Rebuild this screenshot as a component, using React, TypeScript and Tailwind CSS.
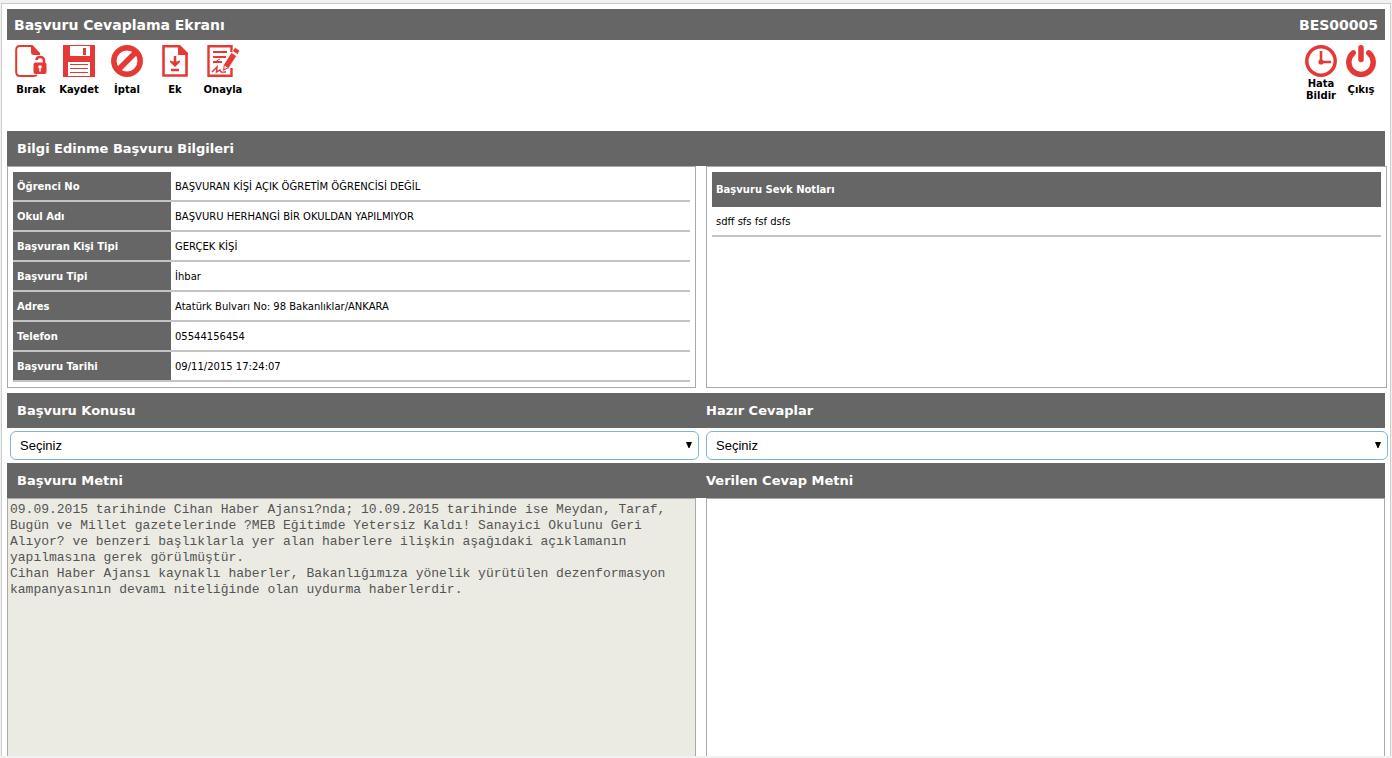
import React from 'react';

const RED = '#e53935';

function LockedPageIcon() {
  return (
    <svg width="32" height="32" viewBox="0 0 32 32" fill="none" aria-hidden="true">
      <path d="M17 1H5Q1.200 1 1.200 5V27Q1.200 31 5 31H18Q20.500 31 22 30" stroke={RED} strokeWidth="2" />
      <path d="M16 0H17.500L25 8V10H19Q16 10 16 7Z" fill={RED} />
      <rect x="18.500" y="17.500" width="13" height="11.500" rx="2" fill={RED} />
      <path d="M21.500 15Q21.500 12 25.200 12T29 15.500V18" stroke={RED} strokeWidth="2.500" />
      <circle cx="25" cy="22" r="1.800" fill="#fff" />
      <path d="M25 22V26.500" stroke="#fff" strokeWidth="1.500" />
    </svg>
  );
}

function SaveIcon() {
  return (
    <svg width="32" height="32" viewBox="0 0 32 32" fill={RED} aria-hidden="true">
      <path d="M0 0H32V32H0Z" />
      <path d="M7 1H27V11H7ZM5 17H27V31H5Z" fill="#fff" />
      <path d="M20 3H23V10H20ZM7 19H25V20H7ZM7 23H25V24H7ZM7 27H25V28H7Z" />
    </svg>
  );
}

function CancelIcon() {
  return (
    <svg width="32" height="32" viewBox="0 0 32 32" fill="none" stroke={RED} strokeWidth="5.500" aria-hidden="true">
      <circle cx="16" cy="16" r="13.200" />
      <path d="M7 25L25 7" />
    </svg>
  );
}

function AttachIcon() {
  return (
    <svg width="26" height="32" viewBox="0 0 26 32" fill="none" stroke={RED} strokeWidth="2" aria-hidden="true">
      <path d="M17 1.200H1.500V30.500H24.500V8" strokeWidth="2.600" />
      <path d="M16 0H18L26 8V10H16Z" fill={RED} stroke="none" />
      <path d="M13 11V18" strokeWidth="2.500" />
      <path d="M8 15.500L11 16.500H15L18 15.500V17L13 22L8 17Z" fill={RED} stroke="none" />
      <path d="M9 25H17" strokeWidth="2.500" />
    </svg>
  );
}

function ApproveIcon() {
  return (
    <svg width="33" height="32" viewBox="0 0 33 32" fill="none" stroke={RED} strokeWidth="2" aria-hidden="true">
      <path d="M24.500 7V1.200H1.500V30.800H24.500V23" strokeWidth="2.400" />
      <path d="M6 7H20M6 12H19M6 17H15" />
      <path d="M13 14L6 18" strokeWidth="1" />
      <path d="M5 27L10 22L9.500 27L13 25L14 27H19" strokeWidth="1.500" />
      <path d="M27 3.500Q28 2.500 29 3L32 5Q33 6 32 7L30.500 9.500L25.500 6ZM24.500 7.500L29.500 11L21.500 23.500L15.500 26.500L16.500 20Z" fill={RED} stroke="#fff" strokeWidth="0.600" />
      <path d="M17.500 20.500L20.500 22.500L17.500 24Z" fill="#fff" stroke="none" />
    </svg>
  );
}

function ClockIcon() {
  return (
    <svg width="32" height="32" viewBox="0 0 32 32" fill="none" stroke={RED} aria-hidden="true">
      <circle cx="16" cy="16" r="14.200" strokeWidth="3.500" />
      <path d="M16 6V17H26" strokeWidth="2.600" />
      <circle cx="16" cy="17" r="2.600" fill={RED} stroke="none" />
    </svg>
  );
}

function PowerIcon() {
  return (
    <svg width="30" height="32" viewBox="0 0 30 32" fill="none" stroke={RED} strokeWidth="5.500" strokeLinecap="round" aria-hidden="true">
      <path d="M7.200 7.800A12.200 12.200 0 1 0 22.800 7.800" />
      <path d="M15 2.800V14.500" />
    </svg>
  );
}

function ToolButton({ label, icon, width }: { label: string; icon: React.ReactNode; width: string }) {
  return (
    <button type="button" className={`flex flex-col items-center ${width}`}>
      {icon}
      <span className="mt-[7px] text-[10px] leading-3 font-bold">{label}</span>
    </button>
  );
}

function BarRow({ children }: { children: React.ReactNode }) {
  return (
    <div className="grid h-[35px] shrink-0 grid-cols-[699fr_679fr] items-center bg-[#666] text-[13px] font-bold text-white">
      {children}
    </div>
  );
}

function SelectBox({ id, className }: { id: string; className: string }) {
  return (
    <div className={`relative ${className}`}>
      <select
        id={id}
        className="block h-[29px] w-full appearance-none rounded-md border border-[#7fb5cf] bg-white pr-6 pl-[9px] font-['Liberation_Sans',sans-serif] text-[13px] text-black"
      >
        <option>Seçiniz</option>
      </select>
      <svg width="6" height="6" viewBox="0 0 6 6" className="pointer-events-none absolute top-[11px] right-[7px]" aria-hidden="true">
        <path d="M0 0H6L3.500 6H2.500Z" fill="#000" />
      </svg>
    </div>
  );
}

const details = [
  ['Öğrenci No', 'BAŞVURAN KİŞİ AÇIK ÖĞRETİM ÖĞRENCİSİ DEĞİL'],
  ['Okul Adı', 'BAŞVURU HERHANGİ BİR OKULDAN YAPILMIYOR'],
  ['Başvuran Kişi Tipi', 'GERÇEK KİŞİ'],
  ['Başvuru Tipi', 'İhbar'],
  ['Adres', 'Atatürk Bulvarı No: 98 Bakanlıklar/ANKARA'],
  ['Telefon', '05544156454'],
  ['Başvuru Tarihi', '09/11/2015 17:24:07'],
];

const requestText =
  '09.09.2015 tarihinde Cihan Haber Ajansı?nda; 10.09.2015 tarihinde ise Meydan, Taraf, Bugün ve Millet gazetelerinde ?MEB Eğitimde Yetersiz Kaldı! Sanayici Okulunu Geri Alıyor? ve benzeri başlıklarla yer alan haberlere ilişkin aşağıdaki açıklamanın yapılmasına gerek görülmüştür.\nCihan Haber Ajansı kaynaklı haberler, Bakanlığımıza yönelik yürütülen dezenformasyon kampanyasının devamı niteliğinde olan uydurma haberlerdir.';

export default function App() {
  return (
    <div className="flex min-h-screen flex-col overflow-x-hidden bg-[#f1f1f1] px-px pt-[3px] pb-0.5 font-['DejaVu_Sans',sans-serif] text-black">
      <main className="flex flex-1 flex-col border border-b-0 border-[#ccc] bg-white px-[5px] pt-[5px]">
        <header className="flex h-[31px] items-center justify-between bg-[#666] px-[7px] text-sm font-bold text-white">
          <h1>Başvuru Cevaplama Ekranı</h1>
          <span>BES00005</span>
        </header>

        <div className="flex h-[91px] shrink-0 justify-between pt-[5px]">
          <div className="flex items-start">
            <ToolButton label="Bırak" icon={<LockedPageIcon />} width="w-12" />
            <ToolButton label="Kaydet" icon={<SaveIcon />} width="w-12" />
            <ToolButton label="İptal" icon={<CancelIcon />} width="w-12" />
            <ToolButton label="Ek" icon={<AttachIcon />} width="w-12" />
            <ToolButton label="Onayla" icon={<ApproveIcon />} width="w-12" />
          </div>
          <div className="flex items-start pr-1">
            <button type="button" className="flex w-10 flex-col items-center text-[10px] leading-3 font-bold">
              <ClockIcon />
              <span className="mt-px">
                Hata
                <br />
                Bildir
              </span>
            </button>
            <ToolButton label="Çıkış" icon={<PowerIcon />} width="w-10" />
          </div>
        </div>

        <BarRow>
          <h2 className="pl-2.5">Bilgi Edinme Başvuru Bilgileri</h2>
        </BarRow>

        <div className="grid shrink-0 grid-cols-[699fr_679fr] text-[10px]">
          <section className="mr-2.5 border border-[#a9a9a9] p-[5px]">
            <table className="w-full border-separate border-spacing-0">
              <tbody>
                {details.map(([label, value]) => (
                  <tr key={label} className="h-[30px]">
                    <th scope="row" className="w-[158px] border-b-2 border-[#c4c4c4] bg-[#666] px-1 text-left font-bold text-white">
                      {label}
                    </th>
                    <td className="border-b-2 border-[#c4c4c4] px-1">{value}</td>
                  </tr>
                ))}
              </tbody>
            </table>
          </section>
          <section className="-mr-0.5 border border-[#a9a9a9] p-[5px]">
            <table className="w-full border-separate border-spacing-0">
              <thead>
                <tr className="h-[35px] bg-[#666] text-left text-white">
                  <th scope="col" className="px-1 font-bold">Başvuru Sevk Notları</th>
                </tr>
              </thead>
              <tbody>
                <tr className="h-[30px]">
                  <td className="border-b-2 border-[#c4c4c4] px-1">sdff sfs fsf dsfs</td>
                </tr>
              </tbody>
            </table>
          </section>
        </div>

        <div className="mt-[5px] flex flex-col">
          <BarRow>
            <label htmlFor="subject" className="pl-2.5">Başvuru Konusu</label>
            <label htmlFor="answers">Hazır Cevaplar</label>
          </BarRow>
          <div className="grid grid-cols-[699fr_679fr] py-[3px]">
            <SelectBox id="subject" className="mr-[7px] ml-[3px]" />
            <SelectBox id="answers" className="-mr-[3px]" />
          </div>
          <BarRow>
            <label htmlFor="request" className="pl-2.5">Başvuru Metni</label>
            <label htmlFor="reply">Verilen Cevap Metni</label>
          </BarRow>
        </div>

        <div className="grid min-h-[200px] flex-1 grid-cols-[699fr_679fr]">
          <textarea
            id="request"
            disabled
            defaultValue={requestText}
            className="mr-2.5 resize-none border border-b-0 border-[#a9a9a9] bg-[#ebebe4] px-0.5 py-[3px] font-['Liberation_Mono',monospace] text-[13px] leading-4 text-[#545454]"
          />
          <textarea
            id="reply"
            className="resize-none border border-b-0 border-[#a9a9a9] bg-white px-0.5 py-[3px] font-['Liberation_Mono',monospace] text-[13px] leading-4"
          />
        </div>
      </main>
    </div>
  );
}
